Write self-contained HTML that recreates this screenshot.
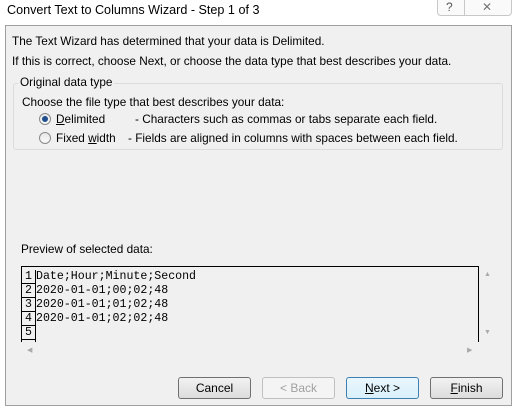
<!DOCTYPE html>
<html><head><style>
*{margin:0;padding:0;box-sizing:border-box}
body{width:518px;height:410px;background:#fff;position:relative;overflow:hidden;font-family:"Liberation Sans",sans-serif;font-size:11.8px;color:#000}
.a{position:absolute;white-space:nowrap}
.body{position:absolute;left:5px;top:25px;width:507px;height:381px;background:#f0f0f0;border:1px solid #a0a0a0}
.grp{position:absolute;left:13px;top:83px;width:490px;height:67px;border:1px solid #dcdcdc;border-radius:3px}
.radio{position:absolute;width:12px;height:12px;border-radius:50%;border:1px solid #8a8a8a;background:linear-gradient(#e8e8e8,#fafafa)}
.btn{position:absolute;top:377px;width:73px;height:22px;border:1px solid #707070;border-radius:3px;background:linear-gradient(#f2f2f2,#dcdcdc);text-align:center;line-height:20px;font-size:12px}
.mono{font-family:"Liberation Mono",monospace;font-size:11.6px}
.ln{position:absolute;left:0;width:14px;height:14px;border-right:1px solid #000;border-bottom:1px solid #000;text-align:center;line-height:14px}
</style></head><body>
<div class="a" style="left:7px;top:3px;font-size:12.6px">Convert Text to Columns Wizard - Step 1 of 3</div>
<div class="a" style="left:437px;top:-2px;width:75px;height:18px;border:1px solid #c8c8c8;border-radius:0 0 4px 4px;background:#fafafa"></div>
<div class="a" style="left:464px;top:-2px;width:1px;height:18px;background:#c8c8c8"></div>
<div class="a" style="left:446px;top:0px;font-size:12px;color:#555">?</div>
<div class="a" style="left:482px;top:0px;font-size:12px;color:#777">✕</div>
<div class="body"></div>
<div class="a" style="left:12px;top:34px">The Text Wizard has determined that your data is Delimited.</div>
<div class="a" style="left:12px;top:54px">If this is correct, choose Next, or choose the data type that best describes your data.</div>
<div class="grp"></div>
<div class="a" style="left:18px;top:75px;background:#f0f0f0;padding:0 2px">Original data type</div>
<div class="a" style="left:22px;top:95px">Choose the file type that best describes your data:</div>
<div class="radio" style="left:39px;top:113px"><div style="position:absolute;left:2px;top:2px;width:6px;height:6px;border-radius:50%;background:#1e4f8c"></div></div>
<div class="a" style="left:56px;top:112px"><u>D</u>elimited</div>
<div class="a" style="left:135px;top:112px">- Characters such as commas or tabs separate each field.</div>
<div class="radio" style="left:39px;top:132px"></div>
<div class="a" style="left:56px;top:131px">Fixed <u>w</u>idth</div>
<div class="a" style="left:128px;top:131px">- Fields are aligned in columns with spaces between each field.</div>
<div class="a" style="left:21px;top:242px">Preview of selected data:</div>
<div class="a mono" style="left:21px;top:266px;width:458px;height:76px;border:1px solid #000;border-bottom:none;overflow:hidden;background:#f0f0f0">
<div class="ln" style="top:3px">1</div><div class="ln" style="top:17px">2</div><div class="ln" style="top:31px">3</div><div class="ln" style="top:45px">4</div><div class="ln" style="top:59px">5</div><div class="ln" style="top:73px"></div>
<div style="position:absolute;left:14px;top:3px;line-height:14px">Date;Hour;Minute;Second<br>2020-01-01;00;02;48<br>2020-01-01;01;02;48<br>2020-01-01;02;02;48</div>
</div>
<div class="a" style="left:484px;top:271px;font-size:7px;color:#aaa">▲</div>
<div class="a" style="left:484px;top:329px;font-size:7px;color:#aaa">▼</div>
<div class="a" style="left:27px;top:346px;font-size:7px;color:#aaa">◀</div>
<div class="a" style="left:467px;top:346px;font-size:7px;color:#aaa">▶</div>
<div class="btn" style="left:178px">Cancel</div>
<div class="btn" style="left:262px;color:#a0a0a0;border-color:#c0c0c0;background:#f4f4f4">&lt; Back</div>
<div class="btn" style="left:346px;border-color:#3c7fb1;background:linear-gradient(#eaf6fd,#d9f0fc)"><u>N</u>ext &gt;</div>
<div class="btn" style="left:430px"><u>F</u>inish</div>
</body></html>
